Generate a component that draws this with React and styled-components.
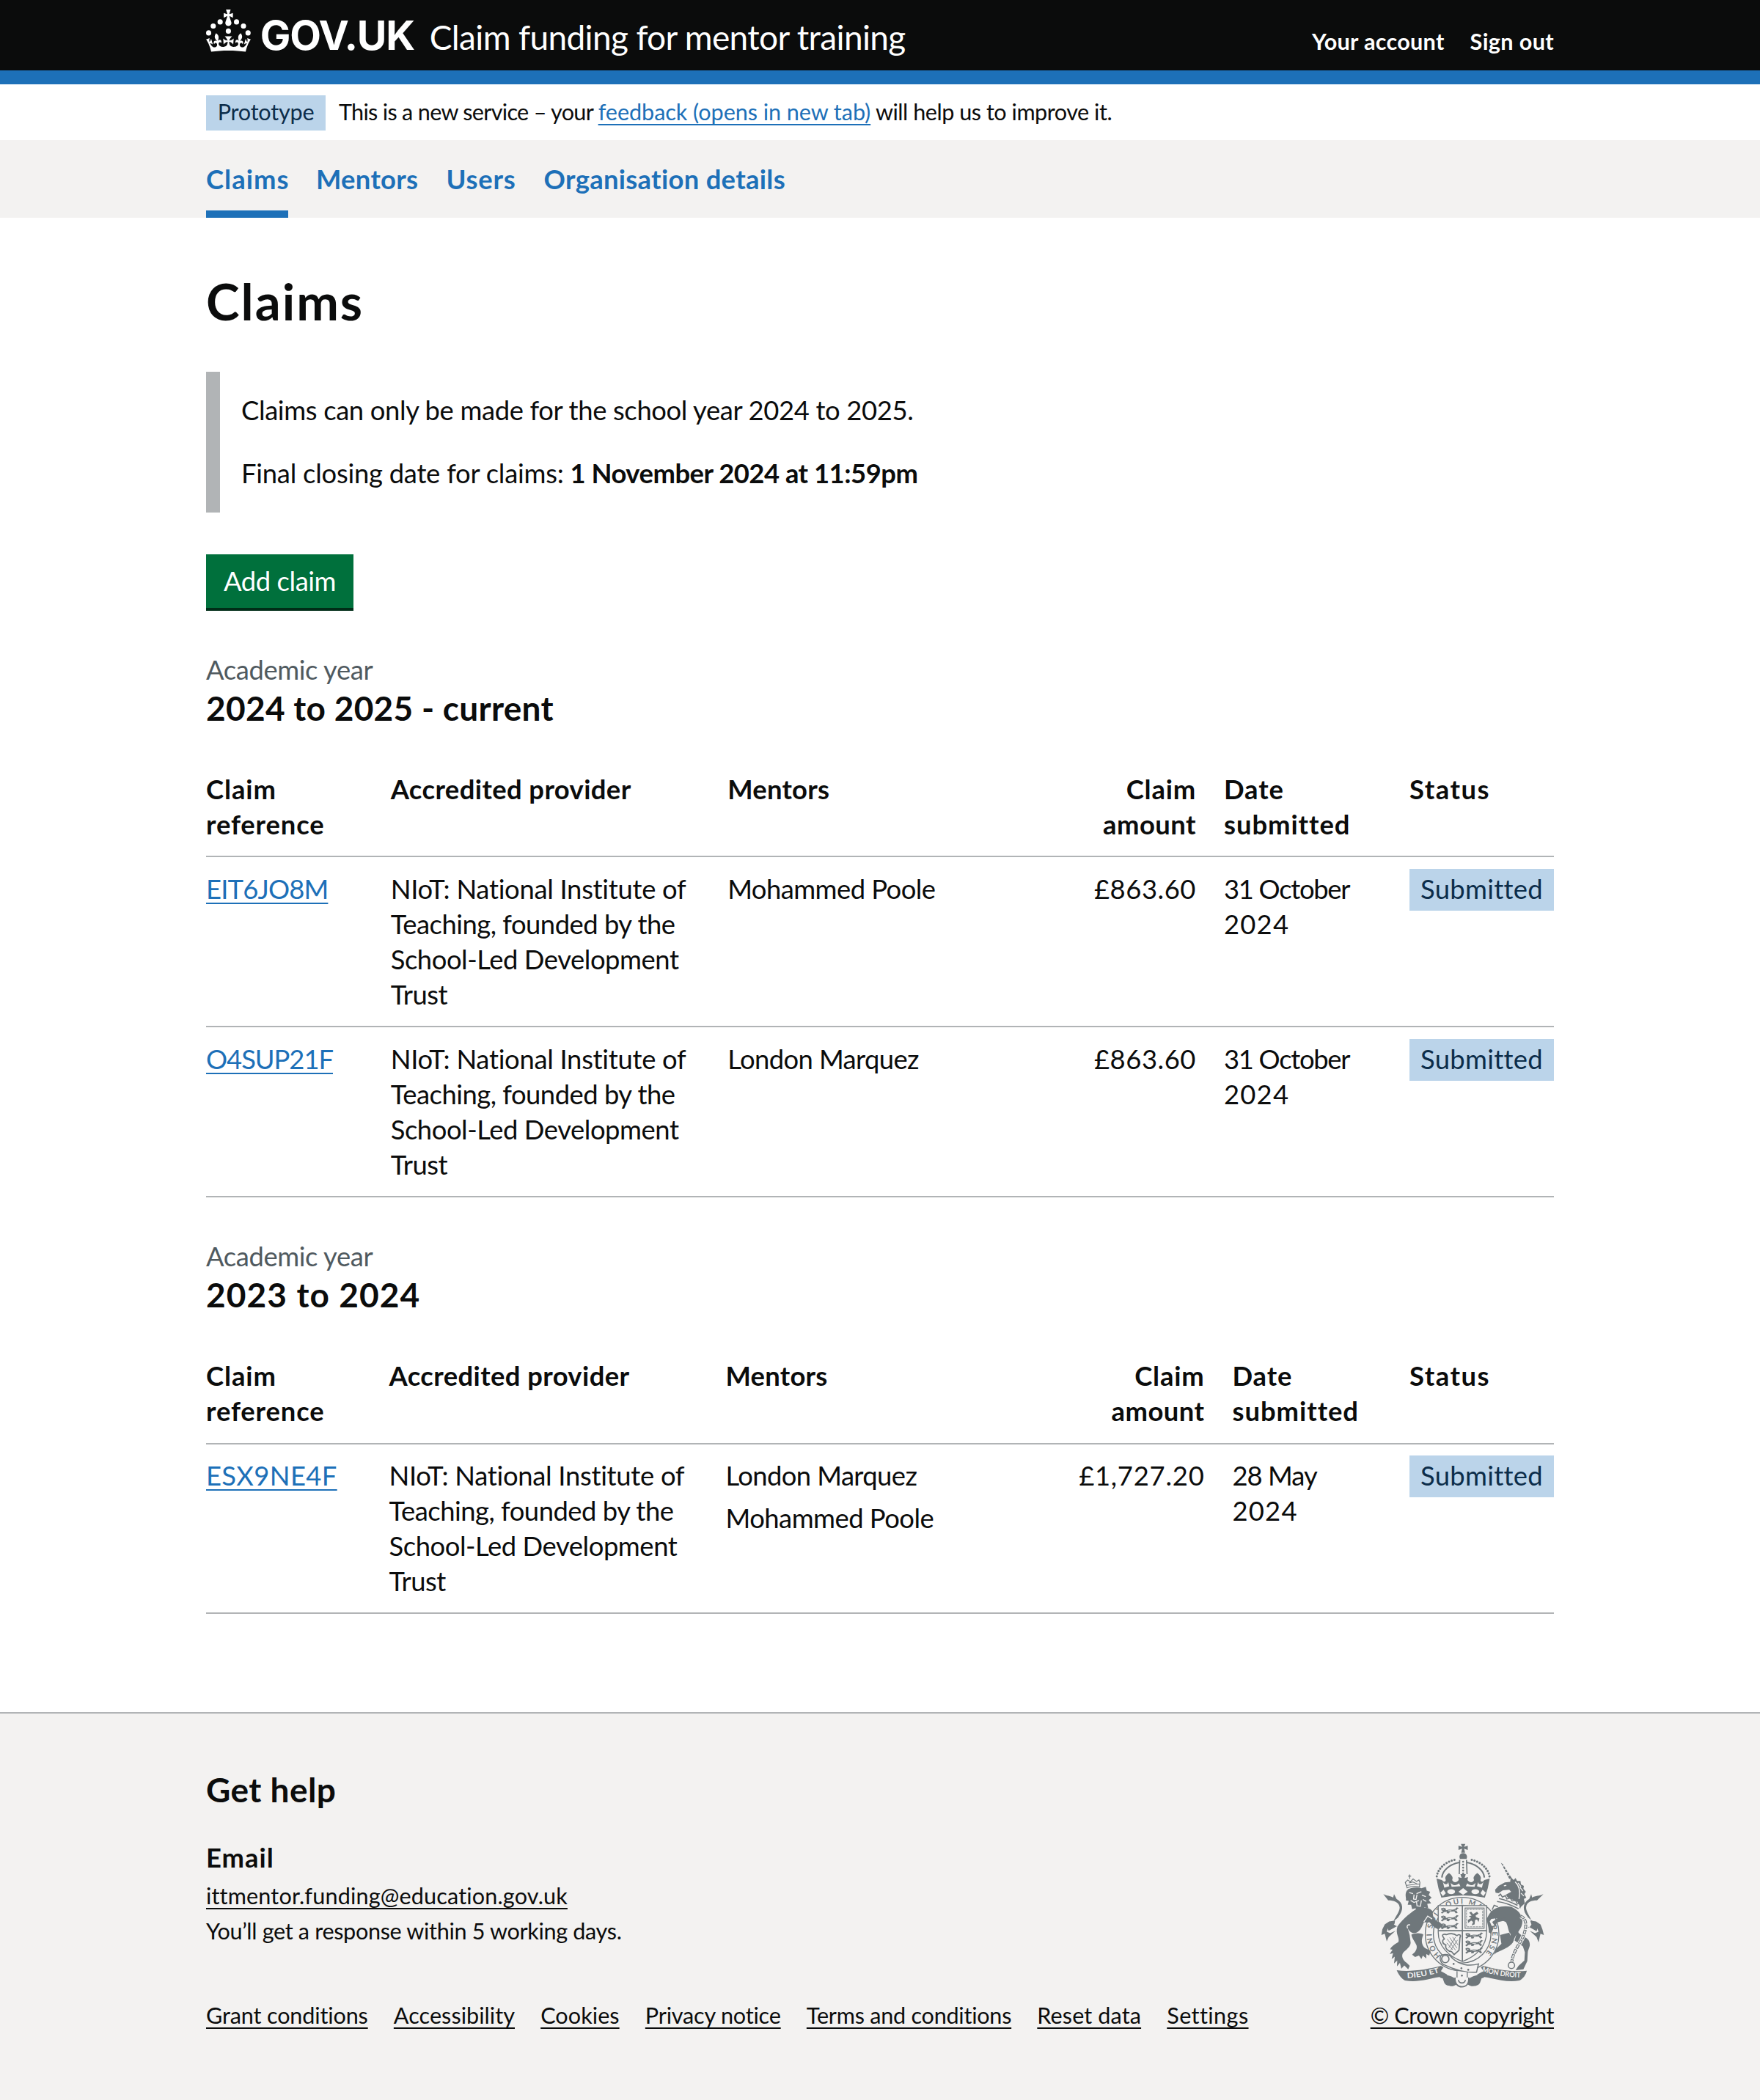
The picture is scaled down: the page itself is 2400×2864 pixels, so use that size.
import React from "react";
import styled, { createGlobalStyle, css } from "styled-components";

const ink = "#0b0c0c";
const blue = "#1d70b8";
const grey = "#b1b4b6";
const panel = "#f3f2f1";
const crestGrey = "#6f777b";

const GlobalStyle = createGlobalStyle`
  html { background: ${panel}; }
  body {
    margin: 0;
    background: #fff;
    color: ${ink};
    font-family: Lato, "Liberation Sans", Arial, sans-serif;
    font-size: 36.4px;
    line-height: 48px;
    font-variant-ligatures: none;
  }
`;

const Container = styled.div`
  width: 1838px;
  margin: 0 auto;
`;

const Text = styled.span`
  letter-spacing: ${(p) => p.$track || 0}px;
  white-space: nowrap;
  ${(p) => p.$bold && css`font-weight: 700;`}
  ${(p) => p.$block && css`display: block;`}
`;

const Link = styled.a`
  color: ${(p) => (p.$dark ? ink : blue)};
  letter-spacing: ${(p) => p.$track || 0}px;
  white-space: nowrap;
  text-decoration: underline;
  text-decoration-thickness: 2px;
  text-underline-offset: 5px;
`;

/* Header */
const Header = styled.header`
  height: 96px;
  background: ${ink};
  border-bottom: 19px solid ${blue};
  color: #fff;
`;
const HeaderRow = styled(Container)`
  display: flex;
  align-items: baseline;
`;
const CrownSvg = styled.svg`
  align-self: flex-start;
  width: 60.8px;
  height: 58px;
  margin-top: 13px;
  fill: #fff;
`;
const Wordmark = styled.span`
  margin-left: 13px;
  width: 212.5px;
  font: 700 55.5px/95px Inter, "Liberation Sans", sans-serif;
  letter-spacing: -1.2px;
  white-space: nowrap;
`;
const ServiceName = styled.span`
  margin-left: 18.5px;
  font-size: 46px;
  letter-spacing: -0.65px;
  white-space: nowrap;
`;
const AccountNav = styled.nav`
  display: flex;
  gap: 35px;
  margin-left: auto;
  padding-top: 1px;
  font-size: 30.6px;
  font-weight: 700;
`;

/* Phase banner */
const PhaseBanner = styled(Container)`
  display: flex;
  align-items: baseline;
  gap: 18px;
  height: 62px;
  padding-top: 14px;
  font-size: 30.6px;
`;
const Tag = styled.strong`
  display: block;
  flex: none;
  box-sizing: border-box;
  background: #bbd4ea;
  color: #0c2d4a;
  font-weight: 400;
  text-align: center;
  letter-spacing: ${(p) => p.$track}px;
  ${(p) =>
    p.$small
      ? css`width: 163px; height: 48px; line-height: 45px;`
      : css`width: 197px; height: 57px; line-height: 54px; margin-top: -3px;`}
`;

/* Primary navigation */
const PrimaryNav = styled.nav`
  height: 106px;
  background: ${panel};
`;
const NavList = styled(Container)`
  display: flex;
  gap: 38px;
`;
const NavItem = styled.a`
  height: 106px;
  line-height: 106px;
  color: ${blue};
  font-weight: 700;
  letter-spacing: ${(p) => p.$track}px;
  ${(p) => p.$active && css`width: 112px; box-shadow: inset 0 -10px ${blue};`}
`;

/* Main */
const Main = styled(Container).attrs({ as: "main" })`
  padding: 76px 0 133.8px;
`;
const Title = styled.h1`
  margin: 0;
  font-size: 68.9px;
  line-height: 76px;
  letter-spacing: 2px;
`;
const Inset = styled.div`
  box-sizing: border-box;
  height: 192px;
  margin: 58px 0 57px;
  padding: 28.2px 0 0 29px;
  border-left: 19px solid ${grey};
`;
const Para = styled.p`
  margin: 0 0 38.2px;
`;
const Button = styled.button`
  display: block;
  width: 201px;
  height: 73px;
  margin: 0 0 60.2px;
  padding: 0;
  border: 0;
  background: #00703c;
  box-shadow: 0 4px 0 #002d18;
  color: #fff;
  font: inherit;
  line-height: 73px;
  letter-spacing: -0.42px;
`;
const Caption = styled.span`
  display: block;
  color: #505a5f;
  font-weight: 400;
  letter-spacing: -0.4px;
`;
const YearHeading = styled.h2`
  margin: ${(p) => (p.$spaced ? 56.8 : 0)}px 0 57.4px;
  font-size: 36.4px;
`;
const Year = styled.span`
  display: block;
  font-size: 46px;
  line-height: 57px;
  letter-spacing: ${(p) => p.$track}px;
`;
const Table = styled.table`
  display: block;
`;
const Row = styled.tr`
  display: grid;
  grid-template-columns: ${(p) => p.$columns};
  border-bottom: 2px solid ${grey};
  padding: ${(p) => (p.$head ? "0 0 19.8px" : "18.6px 0 19px")};
`;
const Group = styled.tbody`
  display: block;
`;
const HeadCell = styled.th`
  padding: 0;
  text-align: left;
  font-weight: 700;
  ${(p) => p.$numeric && css`text-align: right; padding-right: 38px;`}
`;
const Cell = styled.td`
  padding: 0;
  ${(p) => p.$numeric && css`text-align: right; padding-right: 38px;`}
`;
const MentorList = styled.div`
  display: flex;
  flex-direction: column;
  gap: 9.4px;
`;

/* Footer */
const Footer = styled.footer`
  background: ${panel};
  border-top: 2px solid ${grey};
  padding: 75.4px 0 92px;
`;
const FooterRow = styled(Container)`
  display: flex;
  justify-content: space-between;
  align-items: flex-end;
  font-size: 30.6px;
`;
const HelpTitle = styled.h2`
  margin: 0 0 39px;
  font-size: 46px;
  line-height: 58px;
  letter-spacing: 0.45px;
`;
const HelpSubtitle = styled.h3`
  margin: 0 0 5px;
  font-size: 36.4px;
  letter-spacing: 1px;
`;
const FooterLinks = styled.div`
  display: flex;
  gap: 35.2px;
  margin-top: 67px;
`;
const Copyright = styled.div`
  display: flex;
  flex-direction: column;
  align-items: flex-end;
`;
const CrestSvg = styled.svg`
  width: 223px;
  height: 197px;
  margin: 0 13px 14px 0;
`;

const Crown = () => (
  <CrownSvg viewBox="0 0 63.4 60.4" preserveAspectRatio="none" aria-hidden="true">
    <circle cx="20" cy="17.6" r="3.7" />
    <circle cx="10.2" cy="23.5" r="3.7" />
    <circle cx="3.7" cy="33.2" r="3.7" />
    <circle cx="31.7" cy="30.6" r="3.7" />
    <circle cx="43.3" cy="17.6" r="3.7" />
    <circle cx="53.2" cy="23.5" r="3.7" />
    <circle cx="59.7" cy="33.2" r="3.7" />
    <path d="M33.1,9.8c.2-.1.3-.3.5-.5l4.6,2.4v-6.8l-4.6,1.5c-.1-.2-.3-.3-.5-.5l1.9-5.9h-6.7l1.9,5.9c-.2.1-.3.3-.5.5l-4.6-1.5v6.8l4.6-2.4c.1.2.3.3.5.5l-2.6,8c-.9,2.8,1.2,5.7,4.1,5.7h0c3,0,5.1-2.9,4.1-5.7l-2.6-8ZM37,37.9s-3.4,3.8-4.1,6.1c2.2,0,4.2-.5,6.4-2.8l-.7,8.5c-2-2.8-4.4-4.1-5.7-3.8.1,3.1.5,6.7,5.8,7.2,3.7.3,6.7-1.5,7-3.8.4-2.6-2-4.3-3.7-1.6-1.4-4.5,2.4-6.1,4.9-3.2-1.9-4.5-1.8-7.7,2.4-10.9,3,4,2.6,7.3-1.2,11.1,2.4-1.3,6.2,0,4,4.6-1.2-2.8-3.7-2.2-4.2.2-.3,1.7.7,3.7,3,4.2,1.9.3,4.7-.9,7-5.9-1.3,0-2.4.7-3.9,1.7l2.4-8c.6,2.3,1.4,3.7,2.2,4.5.6-1.6.5-2.8,0-5.3l5,1.8c-2.6,3.6-5.2,8.7-7.3,17.5-7.4-1.1-15.7-1.7-24.5-1.7h0c-8.8,0-17.1.6-24.5,1.7-2.1-8.9-4.7-13.9-7.3-17.5l5-1.8c-.5,2.5-.6,3.7,0,5.3.8-.8,1.6-2.3,2.2-4.5l2.4,8c-1.5-1-2.6-1.7-3.9-1.7,2.3,5,5.2,6.2,7,5.9,2.3-.4,3.3-2.4,3-4.2-.5-2.4-3-3.1-4.2-.2-2.2-4.6,1.6-6,4-4.6-3.7-3.7-4.2-7.1-1.2-11.1,4.2,3.2,4.3,6.4,2.4,10.9,2.5-2.8,6.3-1.3,4.9,3.2-1.8-2.7-4.1-1-3.7,1.6.3,2.3,3.3,4.1,7,3.8,5.4-.5,5.7-4.2,5.8-7.2-1.3-.2-3.7,1-5.7,3.8l-.7-8.5c2.2,2.3,4.2,2.7,6.4,2.8-.7-2.3-4.1-6.1-4.1-6.1h10.6Z" />
  </CrownSvg>
);

/* A small walking lion, three of which fill a quarter of the shield. */
const Passant = ({ x, y }) => (
  <g transform={`translate(${x} ${y})`}>
    <path d="M2 4L12 2L20 5L22 12L34 9L50 10L60 6L66 0L74 3L68 7L64 14L70 22L62 25L56 17L38 18L34 25L24 24L26 18L14 20L6 26L1 22L10 15L3 12Z" />
    <path d="M8 8h6M30 14h14M58 11l5 2" stroke={panel} strokeWidth="2.4" />
  </g>
);

const Crest = () => (
  <CrestSvg viewBox="40 28 670 592" fill={crestGrey} stroke="none" aria-hidden="true">
    <defs>
      <path id="garter" d="M286 488A124 124 0 1 1 460 488" />
      <path id="mottoLeft" d="M148 580Q216 577 292 554" />
      <path id="mottoRight" d="M453 553Q530 577 626 578" />
    </defs>

    {/* crown */}
    <path d="M368 30H386L381 42L396 38V55L381 50L385 66H369L373 50L358 55V38L373 42Z" />
    <path d="M364 92C358 78 366 68 377 68C388 68 397 78 391 92Z" />
    <g fill="none" stroke={crestGrey}>
      <path d="M269 163C274 128 312 98 352 94M485 163C480 128 442 98 402 94" strokeWidth="9" strokeLinecap="round" strokeDasharray="0.1 11.5" />
      <path d="M290 168C292 138 325 112 362 106M464 168C462 138 429 112 392 106" strokeWidth="6" />
      <path d="M363 96L361 154M391 96L393 154" strokeWidth="5" />
      <path d="M377 103V152" strokeWidth="8" strokeLinecap="round" strokeDasharray="0.1 12" />
    </g>
    <path d="M268 172L290 178C298 188 304 186 306 178C300 168 308 158 319 150C330 158 338 168 332 178C338 190 350 190 359 178L357 166L371 170L366 154H388L383 170L397 166L395 178C404 190 416 190 422 178C416 168 424 158 435 150C446 158 454 168 448 178C450 186 456 188 464 178L486 172L478 212L466 250Q377 232 288 250L276 212Z" />
    <g fill={panel}>
      <path d="M294 186C302 200 314 198 316 186L320 204L300 210ZM460 186C452 200 440 198 438 186L434 204L454 210Z" />
      <path d="M326 190C336 202 350 202 360 192L366 204L330 206ZM428 190C418 202 404 202 394 192L388 204L424 206Z" />
      <path d="M284 230L297 218L306 232L294 244ZM470 230L457 218L448 232L460 244Z" />
      <ellipse cx="328" cy="226" rx="16" ry="10" />
      <ellipse cx="427" cy="226" rx="16" ry="10" />
      <path d="M358 226L377 211L396 226L377 239Z" />
    </g>

    {/* garter */}
    <circle cx="373" cy="400" r="151" fill={panel} stroke={crestGrey} strokeWidth="4" />
    <circle cx="373" cy="400" r="118" fill="none" stroke={crestGrey} strokeWidth="4" />
    <text fontFamily="Lato, sans-serif" fontSize="30" fontWeight="700" textLength="572" lengthAdjust="spacing">
      <textPath href="#garter">HONI SOIT QUI MAL Y PENSE</textPath>
    </text>

    {/* shield */}
    <path d="M275 283H473V392C473 448 432 490 374 512C316 490 275 448 275 392Z" fill={panel} stroke={crestGrey} strokeWidth="4" />
    <path d="M374 283V512M275 386H473" fill="none" stroke={crestGrey} strokeWidth="5" />
    <Passant x={285} y={290} />
    <Passant x={285} y={322} />
    <Passant x={285} y={354} />
    <Passant x={385} y={393} />
    <Passant x={385} y={424} />
    <Passant x={385} y={454} />
    <g fill="none" stroke={crestGrey}>
      <rect x="385" y="293" width="78" height="83" strokeWidth="3.5" />
      <rect x="391" y="299" width="66" height="71" strokeWidth="2.5" strokeDasharray="9 3" />
    </g>
    <path d="M402 312L410 308L418 318L434 308L440 316L428 324L430 330L444 336L440 350L434 340L426 342L424 360L412 364L418 350L410 344L398 354L396 342L410 334L400 326L412 324Z" />
    <g fill="none" stroke={crestGrey} strokeWidth="5">
      <path d="M293 408C290 402 300 398 308 402C324 396 342 398 352 406C362 398 370 404 364 414L360 466L340 484L330 472C316 470 302 460 306 444C290 440 290 424 300 420Z" />
      <path d="M312 420L346 466M322 414L352 458M334 412L356 444M310 436L334 464M346 412L318 456M354 424L326 466" strokeWidth="2.5" />
    </g>

    {/* lion */}
    <path d="M108 368C66 356 118 320 117 290C114 268 92 262 70 262L50 236C66 244 78 242 90 250L94 236L104 256C132 272 136 300 110 332C94 348 74 354 66 372L72 386L104 368Z" />
    <path d="M98 344L74 348L56 360L46 380L42 404L56 398L64 430L72 412L100 386L78 396L64 390L70 372L96 358Z" />
    <path d="M184 298C150 320 125 345 108 368C98 400 118 412 112 432C100 440 84 448 78 462L88 464L76 482L90 478L84 502L97 492L94 520L107 508L106 532L118 518L124 542L136 528L152 544L158 530L146 518C128 505 124 490 130 478C144 462 160 455 162 436L158 404L150 376C160 395 172 398 186 394C204 385 208 370 216 352L240 352C250 366 262 376 276 380L286 372L294 378L292 362L280 350C264 348 252 335 252 306C240 292 225 290 210 292Z" />
    <path d="M165 402C180 394 205 394 214 402C204 425 206 445 222 458L244 468L238 488L226 482L226 500L212 488L206 502L196 488L180 494L168 484C182 474 190 460 186 446C180 430 168 420 165 402Z" />
    <path d="M146 222C136 240 146 252 142 262L154 264L150 280L164 280L168 298L182 294L190 308L200 298L214 304L218 290L234 294L230 276L246 274L236 260L248 250L236 240L242 226L228 222L224 206L206 212C186 206 164 210 146 222Z" />
    <g fill="none" stroke={panel} strokeWidth="4">
      <path d="M156 230L172 234M186 234L206 226M176 238L174 256L184 258L188 238M162 262L176 270L196 262M186 266L188 284L202 286L206 262M208 240L224 246M212 258L226 266M150 376C144 366 150 360 160 362M216 350L232 326L250 338" />
    </g>
    <g fill="none" stroke={crestGrey} strokeWidth="3.5">
      <path d="M148 212L140 188L150 178L160 186L172 174L186 184L196 178L200 188L198 208M148 210Q172 200 200 206M150 218Q174 208 202 212M158 156V174M152 162H164M156 190L170 186L188 194M146 200L198 194" />
    </g>

    {/* unicorn */}
    <path d="M532 108L540 114L576 170L566 174Z" />
    <path d="M536 124L548 118M544 138L556 130M552 150L564 142M560 162L572 154" stroke={panel} strokeWidth="4" />
    <path d="M508 218L522 202L548 188L570 186L572 166L584 178L592 170L598 182L612 182L614 196L626 202L624 214L634 226L628 236L636 250L626 256L630 274L612 290L600 268L560 250L552 238L574 226L566 218L540 220L522 232L510 230Z" />
    <path d="M590 186C606 200 612 224 606 256M602 190L614 206M610 208L622 224M614 232L626 244M544 202L554 200" fill="none" stroke={panel} strokeWidth="4" />
    <g fill="none" stroke={crestGrey} strokeWidth="4.5">
      <path d="M522 244L530 236L538 248L550 242L556 256L570 252L578 264L592 262L598 274L612 276L610 294M516 266Q560 272 604 296M496 300L504 282L520 288M524 254Q560 262 600 282" />
    </g>
    <path d="M484 318C500 290 540 280 574 288C604 300 630 330 616 368C606 390 590 404 584 426C580 446 546 462 508 478L512 466C534 452 556 436 566 418L572 400C560 388 562 364 552 350C530 342 512 330 492 338L486 348L494 366L502 374L492 398L482 392C484 376 474 352 474 336Z" />
    <path d="M496 350L512 338L548 334L556 342L516 352L508 372L504 362Z" />
    <path d="M528 404L566 394L572 410L556 440L530 458L504 484L510 462L534 440Z" />
    <path d="M600 384C606 412 650 408 650 440C652 452 644 460 642 476L640 510L624 544L592 548L604 530L628 508L630 474L622 450L588 426Z" />
    <path d="M640 376C684 356 634 320 635 290C638 268 656 262 680 262L706 236C690 244 672 242 660 250L656 236L648 256C620 272 618 304 644 332C660 348 680 354 684 372L678 388L646 370Z" />
    <path d="M652 344L676 348L694 360L702 380L708 404L694 398L686 434L678 412L650 386L672 396L686 390L680 372L656 358Z" />
    <path d="M612 326C642 336 638 380 618 420C600 452 580 480 577 512" fill="none" stroke={panel} strokeWidth="18" />
    <path d="M612 326C642 336 638 380 618 420C600 452 580 480 577 512" fill="none" stroke={crestGrey} strokeWidth="12" strokeDasharray="18 4" />
    <path d="M612 326C642 336 638 380 618 420C600 452 580 480 577 512" fill="none" stroke={panel} strokeWidth="5" strokeDasharray="12 10" strokeDashoffset="-3" />
    <circle cx="575" cy="528" r="13" fill={panel} stroke={crestGrey} strokeWidth="4.5" />

    {/* buckle and ribbons */}
    <path d="M105 548C160 556 230 545 286 530L296 536L286 552L312 566C300 582 290 584 280 576C230 584 190 600 138 590C124 582 112 566 105 548Z" />
    <path d="M638 550C582 556 510 545 460 530L450 536L460 552L434 566C446 582 454 584 464 576C516 584 560 600 608 590C624 582 634 566 638 550Z" />
    <path d="M290 572C310 562 332 574 344 582L352 604C340 618 308 616 300 600ZM456 572C436 562 414 574 402 582L394 604C406 618 438 616 446 600Z" />
    <path d="M286 488C302 478 324 484 334 500C360 524 400 534 440 522L432 556C380 560 330 540 296 524C282 514 280 498 286 488Z" fill={panel} stroke={crestGrey} strokeWidth="4.5" />
    <circle cx="304" cy="502" r="15" fill="none" stroke={crestGrey} strokeWidth="5" />
    <circle cx="338" cy="522" r="4" />
    <circle cx="370" cy="540" r="4" />
    <circle cx="398" cy="546" r="4" />
    <path d="M352 552V586H394V556" fill={panel} stroke={crestGrey} strokeWidth="4" />
    <path d="M344 578C342 604 356 616 372 616C390 616 402 604 400 578M358 588C358 604 386 604 386 588" fill={panel} stroke={crestGrey} strokeWidth="5" />
    <circle cx="372" cy="570" r="4" />
    <g fontFamily="Lato, sans-serif" fontSize="30" fontWeight="700" fill={panel}>
      <text textLength="134" lengthAdjust="spacingAndGlyphs"><textPath href="#mottoLeft">DIEU ET</textPath></text>
      <text textLength="162" lengthAdjust="spacingAndGlyphs"><textPath href="#mottoRight">MON DROIT</textPath></text>
    </g>
  </CrestSvg>
);

const providerLines = [
  ["NIoT: National Institute of", -0.3],
  ["Teaching, founded by the", -0.5],
  ["School-Led Development", -0.44],
  ["Trust", -0.5],
];

const years = [
  {
    title: "2024 to 2025 - current",
    track: 0.28,
    columns: "251.7px 459.5px 400px 276.8px 253px 197px",
    claims: [
      { ref: ["EIT6JO8M", -0.85], mentors: [["Mohammed Poole", -0.55]], amount: ["£863.60", 0.55], date: [["31 October", -1.3], ["2024", 1.2]] },
      { ref: ["O4SUP21F", -1.05], mentors: [["London Marquez", -0.6]], amount: ["£863.60", 0.55], date: [["31 October", -1.3], ["2024", 1.2]] },
    ],
  },
  {
    title: "2023 to 2024",
    track: 1.1,
    columns: "249.5px 459px 400px 291px 241.5px 197px",
    claims: [
      { ref: ["ESX9NE4F", 0.35], mentors: [["London Marquez", -0.6], ["Mohammed Poole", -0.52]], amount: ["£1,727.20", 0.75], date: [["28 May", -1], ["2024", 1.2]] },
    ],
  },
];

const Lines = ({ items, bold }) =>
  items.map(([text, track]) => (
    <Text key={text} $block $bold={bold} $track={track}>{text}</Text>
  ));

const ClaimsTable = ({ year }) => (
  <Table>
    <Group as="thead">
      <Row $head $columns={year.columns}>
        <HeadCell><Lines items={[["Claim", 0.9], ["reference", 0.85]]} /></HeadCell>
        <HeadCell><Text $track={0.4}>Accredited provider</Text></HeadCell>
        <HeadCell><Text $track={0.25}>Mentors</Text></HeadCell>
        <HeadCell $numeric><Lines items={[["Claim", 0.8], ["amount", 0.45]]} /></HeadCell>
        <HeadCell><Lines items={[["Date", 0.9], ["submitted", 0.95]]} /></HeadCell>
        <HeadCell><Text $track={1.5}>Status</Text></HeadCell>
      </Row>
    </Group>
    <Group>
      {year.claims.map((claim) => (
        <Row key={claim.ref[0]} $columns={year.columns}>
          <Cell><Link href="#" $track={claim.ref[1]}>{claim.ref[0]}</Link></Cell>
          <Cell><Lines items={providerLines} /></Cell>
          <Cell><MentorList><Lines items={claim.mentors} /></MentorList></Cell>
          <Cell $numeric><Text $track={claim.amount[1]}>{claim.amount[0]}</Text></Cell>
          <Cell><Lines items={claim.date} /></Cell>
          <Cell><Tag $track={0.3}>Submitted</Tag></Cell>
        </Row>
      ))}
    </Group>
  </Table>
);

const footerLinks = [
  ["Grant conditions", -0.15],
  ["Accessibility", 0.03],
  ["Cookies", 0.05],
  ["Privacy notice", -0.2],
  ["Terms and conditions", -0.25],
  ["Reset data", 0.1],
  ["Settings", 0.4],
];

export default function App() {
  return (
    <>
      <GlobalStyle />
      <Header>
        <HeaderRow>
          <Crown />
          <Wordmark>GOV.UK</Wordmark>
          <ServiceName>Claim funding for mentor training</ServiceName>
          <AccountNav>
            <Text $track={0.28}>Your account</Text>
            <Text $track={0.36}>Sign out</Text>
          </AccountNav>
        </HeaderRow>
      </Header>
      <PhaseBanner>
        <Tag $small $track={-0.22}>Prototype</Tag>
        <div>
          <Text $track={-0.7}>This is a new service – your </Text>
          <Link href="#" $track={-0.06}>feedback (opens in new tab)</Link>
          <Text $track={-0.48}> will help us to improve it.</Text>
        </div>
      </PhaseBanner>
      <PrimaryNav>
        <NavList>
          <NavItem $active $track={1.04}>Claims</NavItem>
          <NavItem $track={0.29}>Mentors</NavItem>
          <NavItem $track={0.8}>Users</NavItem>
          <NavItem $track={0.3}>Organisation details</NavItem>
        </NavList>
      </PrimaryNav>
      <Main>
        <Title>Claims</Title>
        <Inset>
          <Para><Text $track={-0.37}>Claims can only be made for the school year 2024 to 2025.</Text></Para>
          <Para>
            <Text $track={-0.25}>Final closing date for claims: </Text>
            <Text $bold $track={-0.5}>1 November 2024 at 11:59pm</Text>
          </Para>
        </Inset>
        <Button>Add claim</Button>
        {years.map((year, i) => (
          <section key={year.title}>
            <YearHeading $spaced={i > 0}>
              <Caption>Academic year</Caption>
              <Year $track={year.track}>{year.title}</Year>
            </YearHeading>
            <ClaimsTable year={year} />
          </section>
        ))}
      </Main>
      <Footer>
        <FooterRow>
          <div>
            <HelpTitle>Get help</HelpTitle>
            <HelpSubtitle>Email</HelpSubtitle>
            <div><Link $dark href="#" $track={0.15}>ittmentor.funding@education.gov.uk</Link></div>
            <div><Text $track={-0.33}>You’ll get a response within 5 working days.</Text></div>
            <FooterLinks>
              {footerLinks.map(([label, track]) => (
                <Link key={label} $dark href="#" $track={track}>{label}</Link>
              ))}
            </FooterLinks>
          </div>
          <Copyright>
            <Crest />
            <Link $dark href="#" $track={-0.37}>© Crown copyright</Link>
          </Copyright>
        </FooterRow>
      </Footer>
    </>
  );
}
